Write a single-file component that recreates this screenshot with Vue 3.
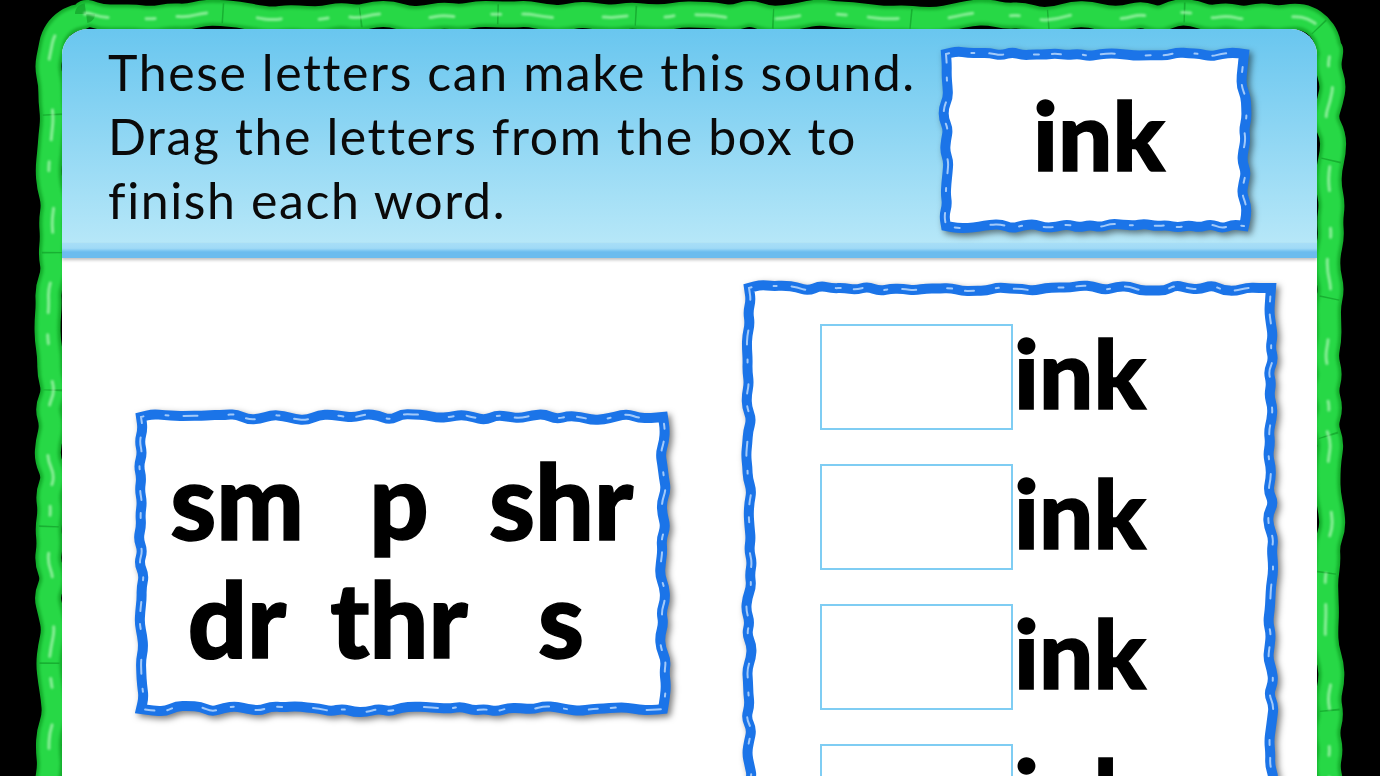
<script setup>
// hand-drawn looking borders: walk round a rectangle and jitter each point
const wobble = (w, h, inset, r, step, amp, seed) => {
  let s = seed
  const rnd = () => {
    s = (s * 16807) % 2147483647
    return s / 2147483647 - 0.5
  }
  const pts = []
  const edge = (x1, y1, x2, y2, nx, ny) => {
    // doubling the corner point keeps square corners square
    if (!r) pts.push([x1, y1], [x1, y1])
    const len = Math.hypot(x2 - x1, y2 - y1)
    const n = Math.max(1, Math.round(len / step))
    for (let i = r ? 0 : 1; i < n; i++) {
      const t = i / n
      const o = rnd() * amp * 2
      pts.push([x1 + (x2 - x1) * t + nx * o, y1 + (y2 - y1) * t + ny * o])
    }
  }
  const corner = (cx, cy, a) => {
    for (let i = 0; i <= 4; i++) {
      const t = a + (i / 4) * Math.PI / 2
      pts.push([cx + Math.cos(t) * r, cy + Math.sin(t) * r])
    }
  }
  const a = inset
  const b = w - inset
  const c = h - inset
  const d = inset
  edge(a + r, d, b - r, d, 0, 1)
  if (r) corner(b - r, d + r, -Math.PI / 2)
  edge(b, d + r, b, c - r, 1, 0)
  if (r) corner(b - r, c - r, 0)
  edge(b - r, c, a + r, c, 0, 1)
  if (r) corner(a + r, c - r, Math.PI / 2)
  edge(a, c - r, a, d + r, 1, 0)
  if (r) corner(a + r, d + r, Math.PI)
  const mid = (p, q) => `${((p[0] + q[0]) / 2).toFixed(1)} ${((p[1] + q[1]) / 2).toFixed(1)}`
  let path = `M${mid(pts[pts.length - 1], pts[0])}`
  pts.forEach((p, i) => {
    path += ` Q${p[0].toFixed(1)} ${p[1].toFixed(1)} ${mid(p, pts[(i + 1) % pts.length])}`
  })
  return path + ' Z'
}

const framePath = wobble(1300, 960, 11, 34, 17, 4.5, 4711)
const inkBoxPath = wobble(306, 180, 4, 0, 11, 2.6, 101)
const lettersBoxPath = wobble(530, 300, 4, 0, 12, 3.2, 2024)
const wordsBoxPath = wobble(530, 700, 4, 0, 12, 3.2, 777)

const letters = ['sm', 'p', 'shr', 'dr', 'thr', 's']
const rows = [1, 2, 3, 4]
</script>

<template>
  <div class="page">
    <div class="frame">
      <svg class="frame-line" width="1300" height="960" viewBox="0 0 1300 960">
        <path :d="framePath" class="green-base" />
        <path :d="framePath" class="green-mid" />
        <path :d="framePath" class="green-crack" />
        <path :d="framePath" class="green-shine" />
      </svg>
      <div class="panel">
        <div class="header">
          <p class="instructions">These letters can make this sound. Drag the letters from the box to finish each word.</p>
          <div class="box ink-box">
            <svg class="box-line" width="306" height="180" viewBox="0 0 306 180">
              <path :d="inkBoxPath" class="blue-base" />
              <path :d="inkBoxPath" class="blue-shine" />
            </svg>
            <span class="big-word">ink</span>
          </div>
        </div>
        <div class="header-bar"></div>
        <div class="content">
          <div class="box letters-box">
            <svg class="box-line" width="530" height="300" viewBox="0 0 530 300">
              <path :d="lettersBoxPath" class="blue-base" />
              <path :d="lettersBoxPath" class="blue-shine" />
            </svg>
            <span v-for="item in letters" :key="item" class="big-word letter">{{ item }}</span>
          </div>
          <div class="box words-box">
            <svg class="box-line" width="530" height="700" viewBox="0 0 530 700">
              <path :d="wordsBoxPath" class="blue-base" />
              <path :d="wordsBoxPath" class="blue-shine" />
            </svg>
            <div v-for="row in rows" :key="row" class="word-row">
              <div class="drop"></div>
              <span class="big-word">ink</span>
            </div>
          </div>
        </div>
      </div>
    </div>
  </div>
</template>

<style>
html, body {
  margin: 0;
  background: #000;
}
</style>

<style scoped>
.page {
  width: 1380px;
  height: 776px;
  overflow: hidden;
  background: #000;
  padding: 5px 40px 0;
  box-sizing: border-box;
}

.frame {
  position: relative;
  width: 1300px;
  height: 960px;
  padding: 24px 23px 0 22px;
  box-sizing: border-box;
}

.frame-line {
  position: absolute;
  left: 0;
  top: 0;
  overflow: visible;
}

.green-base {
  fill: none;
  stroke: #14ad2c;
  stroke-width: 26;
  stroke-linejoin: round;
}

.green-mid {
  fill: none;
  stroke: #27d846;
  stroke-width: 20;
  stroke-linejoin: round;
  filter: blur(1.5px);
}

.green-crack {
  fill: none;
  stroke: #12a02a;
  stroke-width: 20;
  stroke-dasharray: 1.5 137;
  opacity: 0.7;
}

.green-shine {
  fill: none;
  stroke: #b4f7bb;
  stroke-width: 3;
  stroke-linecap: round;
  stroke-dasharray: 24 38 9 22 30 51;
  opacity: 0.7;
  filter: blur(0.8px);
}

.panel {
  position: relative;
  height: 930px;
  background: #fff;
  border-radius: 26px 26px 0 0;
  overflow: hidden;
}

.header {
  display: flex;
  align-items: flex-start;
  height: 214px;
  padding: 11px 0 0 46px;
  box-sizing: border-box;
  background: linear-gradient(#69c6ef, #b6e7f8);
}

.header-bar {
  height: 15px;
  background: linear-gradient(#a8def7 0, #a0daf6 35%, #6cbcee 60%, #6cbcee 100%);
  box-shadow: 0 2px 3px rgba(0, 0, 0, 0.25);
}

.instructions {
  width: 820px;
  margin: 0 14px 0 0;
  font-family: Lato, "Open Sans", sans-serif;
  font-size: 50px;
  line-height: 64px;
  letter-spacing: 1.6px;
  color: #0a0a0a;
}

.box {
  position: relative;
  box-sizing: border-box;
}

.box-line {
  position: absolute;
  left: 0;
  top: 0;
  overflow: visible;
  filter: drop-shadow(3px 3px 3px rgba(0, 0, 0, 0.5));
}

.blue-base {
  fill: #fff;
  stroke: #1b74e8;
  stroke-width: 10;
  stroke-linejoin: miter;
}

.blue-shine {
  fill: none;
  stroke: #cfe6ff;
  stroke-width: 2;
  stroke-linecap: round;
  stroke-dasharray: 9 22 3 15 14 31 5 13;
  opacity: 0.75;
  filter: blur(0.5px);
}

.ink-box {
  width: 306px;
  height: 180px;
  margin-top: 10px;
  display: flex;
  align-items: center;
  justify-content: center;
  padding: 0 0 12px 8px;
}

.big-word {
  position: relative;
  font-family: Lato, "Open Sans", sans-serif;
  font-weight: 900;
  font-size: 96px;
  line-height: 96px;
  color: #000;
  -webkit-text-stroke: 1.5px #000;
}

.content {
  display: flex;
  padding: 26px 0 0 75px;
  gap: 78px;
  align-items: flex-start;
}

.letters-box {
  width: 530px;
  height: 300px;
  margin-top: 129px;
  display: grid;
  grid-template-columns: repeat(3, 162px);
  grid-auto-rows: 118px;
  padding: 28px 0 0 19px;
  text-align: center;
}

.letter {
  font-size: 104px;
  line-height: 118px;
}

.words-box {
  width: 530px;
  height: 700px;
  padding: 40px 0 0 75px;
  display: flex;
  flex-direction: column;
  gap: 34px;
}

.word-row {
  display: flex;
  align-items: flex-start;
  gap: 1px;
  height: 106px;
}

.drop {
  position: relative;
  width: 193px;
  height: 106px;
  box-sizing: border-box;
  border: 2px solid #7fcdf3;
}
</style>
